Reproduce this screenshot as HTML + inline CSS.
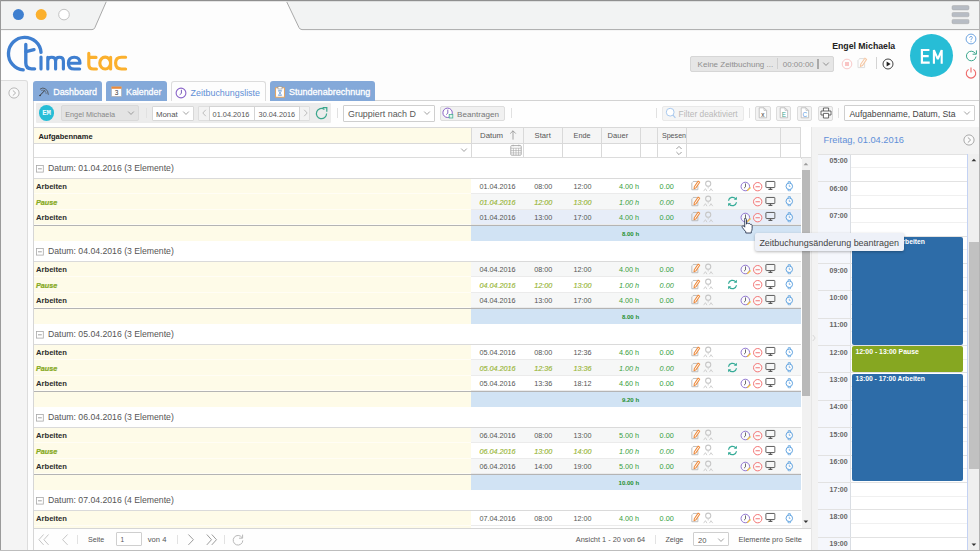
<!DOCTYPE html>
<html><head><meta charset="utf-8"><title>TimeTac</title>
<style>
html,body{margin:0;padding:0;}
body{width:980px;height:551px;overflow:hidden;position:relative;background:#fdfdfd;font-family:"Liberation Sans",sans-serif;}
.a{position:absolute;}
.t{position:absolute;white-space:nowrap;}
svg{position:absolute;overflow:visible;}
</style></head><body>
<svg width="0" height="0" style="position:absolute">
<defs>
<symbol id="i-edit" viewBox="0 0 12 12"><path d="M3.2 1.6h5.2M2 3v7.6h6.6V6" fill="none" stroke="#b9b9b9" stroke-width="1"/><path d="M2 3l1.4-1.4V3z" fill="#ccc"/><path d="M8.9 1.2l1.7 1.2-4.2 6.2-2 .9.3-2.2z" fill="#fff" stroke="#ee8a3c" stroke-width="1.1" stroke-linejoin="round"/></symbol>
<symbol id="i-user" viewBox="0 0 12 12"><circle cx="6" cy="3.6" r="2.5" fill="none" stroke="#c6c6c6" stroke-width="1"/><path d="M6 6.2v2M1.6 10.8l1.7-2.4 1.5 2.4M7.2 10.8l1.5-2.4 1.7 2.4" fill="none" stroke="#cdcdcd" stroke-width=".9"/></symbol>
<symbol id="i-sync" viewBox="0 0 12 12"><path d="M1.6 5.2A4.5 4.5 0 0 1 9.6 3.2M10.4 6.8A4.5 4.5 0 0 1 2.4 8.8" fill="none" stroke="#35ab97" stroke-width="1.4"/><path d="M10.8 .8v3.4H7.4zM1.2 11.2V7.8h3.4z" fill="#35ab97"/></symbol>
<symbol id="i-clock" viewBox="0 0 12 12"><circle cx="5.6" cy="5.8" r="4.5" fill="#fff" fill-opacity=".6" stroke="#9075d0" stroke-width="1.05"/><path d="M5.8 2.6v3.6L4.2 7.6" fill="none" stroke="#555" stroke-width=".9"/><path d="M10.6 6.4l1 1-3 3-1.4.4.4-1.4z" fill="#f3c03c"/></symbol>
<symbol id="i-minus" viewBox="0 0 12 12"><circle cx="6" cy="6" r="4.4" fill="#fff" fill-opacity=".5" stroke="#f27474" stroke-width="1.05"/><path d="M3.7 6h4.6" stroke="#f27474" stroke-width="1.2"/></symbol>
<symbol id="i-mon" viewBox="0 0 12 12"><rect x="1" y="1.6" width="10" height="6.8" rx=".6" fill="none" stroke="#5c5c5c" stroke-width="1.1"/><path d="M6 8.4v1.6M3.8 10.4h4.4" stroke="#5c5c5c" stroke-width="1.2"/></symbol>
<symbol id="i-watch" viewBox="0 0 12 12"><circle cx="6" cy="6" r="3.7" fill="#fff" fill-opacity=".5" stroke="#5fa2e0" stroke-width="1.1"/><path d="M4.5 2.6L4.9 .7h2.2L7.5 2.6M4.5 9.4l.4 1.9h2.2L7.5 9.4" fill="none" stroke="#5fa2e0" stroke-width=".9"/><path d="M6 4.2V6.2h1.3" fill="none" stroke="#5fa2e0" stroke-width=".8"/></symbol>
<symbol id="i-chev" viewBox="0 0 10 10"><path d="M1.5 3.2L5 6.8 8.5 3.2" fill="none" stroke="currentColor" stroke-width="1"/></symbol>
</defs></svg>
<svg style="left:0;top:0" width="980" height="32" viewBox="0 0 980 32">
<rect x="0" y="0" width="980" height="29.5" fill="#f2f3f3"/>
<path d="M92 29.6 L94.5 28.4 L106 2.2 Q106.6 1.2 108 1.2 L285 1.2 Q286.4 1.2 287 2.4 L299 27.6 Q299.8 29.4 302 29.6 L980 29.6 L980 32 L0 32 L0 29.6 Z" fill="#fdfdfd"/>
<path d="M0 29.6 L92 29.6 Q94 29.6 94.8 27.8 L106.2 1.8 M286.8 2 L299 27.6 Q299.8 29.4 302 29.6 L980 29.6" fill="none" stroke="#a9a9a9" stroke-width="1"/>
<rect x="0" y="0" width="980" height="1.2" fill="#8f8f8f"/>
<circle cx="18.4" cy="14.6" r="5.5" fill="#3f7fcf"/>
<circle cx="41.2" cy="14.6" r="5.5" fill="#fbb02d"/>
<circle cx="64" cy="14.6" r="5.3" fill="#fff" stroke="#b5b5b5" stroke-width="0.8"/>
<rect x="952" y="5.6" width="17" height="4.3" rx="1.3" fill="#b7bcc4" stroke="#a8a8a8" stroke-width=".5"/>
<rect x="952" y="12.5" width="17" height="4.3" rx="1.3" fill="#b7bcc4" stroke="#a8a8a8" stroke-width=".5"/>
<rect x="952" y="19.4" width="17" height="4.3" rx="1.3" fill="#b7bcc4" stroke="#a8a8a8" stroke-width=".5"/>
</svg>
<div class="a" style="left:0.00px;top:0.00px;width:1.40px;height:551.00px;background:#9a9a9a;"></div><div class="a" style="left:979.00px;top:0.00px;width:1.00px;height:551.00px;background:#b4b4b4;z-index:40;"></div><div class="a" style="left:0.00px;top:549.70px;width:980.00px;height:1.30px;background:#bdbdbd;z-index:50;"></div><svg style="left:0;top:30px" width="140" height="50" viewBox="0 30 140 50" fill="none" stroke-linecap="round" stroke-linejoin="round">
<g stroke="#3f7fd0" stroke-width="3.35">
<path d="M23.2 69.9 A16.3 16.3 0 1 1 41 52.4"/>
<path d="M25.8 44.4 V63 Q25.8 68.8 31.6 68.8 H34.6"/>
<path d="M26 51.6 L34 49.6"/>
</g><g stroke="#3f7fd0" stroke-width="3.15"><path d="M41 57 V69"/>
<path d="M47.8 69 V57.2 M47.8 61 Q47.8 57.2 51.7 57.2 Q55.6 57.2 55.6 61 V69 M55.6 61 Q55.6 57.2 59.5 57.2 Q63.4 57.2 63.4 61 V69"/>
<path d="M68.6 63.2 H80 Q80 57.2 74.3 57.2 Q68.4 57.2 68.4 63.2 Q68.4 69 74.3 69 H79.6"/>
</g>
<g stroke="#fbb02d" stroke-width="3.15">
<path d="M88.8 53.4 V64.4 Q88.8 69 93.4 69 H96.4 M88.8 57.4 H96"/>
<path d="M110.6 57.2 V69 M110.6 63.1 A5.4 5.9 0 1 0 99.8 63.1 A5.4 5.9 0 1 0 110.6 63.1"/>
<path d="M125.6 57.2 H121.4 Q115.6 57.2 115.6 63.1 Q115.6 69 121.4 69 H125.6"/>
</g>
</svg>
<span class="t" style="left:832.20px;top:39.00px;font-size:8.72px;line-height:14px;color:#222;font-weight:bold;">Engel Michaela</span><div class="a" style="left:690.00px;top:56.40px;width:143.60px;height:15.20px;background:#e6e6e6;border:1px solid #d6d6d6;box-sizing:border-box;border-radius:2px;"></div><span class="t" style="left:697.60px;top:58.00px;font-size:8.00px;line-height:13px;color:#8e8e8e;">Keine Zeitbuchung ...</span><div class="a" style="left:777.30px;top:58.40px;width:0.90px;height:11.00px;background:#cfcfcf;"></div><span class="t" style="left:782.80px;top:58.00px;font-size:7.96px;line-height:13px;color:#8e8e8e;">00:00:00</span><div class="a" style="left:817.20px;top:58.60px;width:1.40px;height:10.80px;background:#a9a9a9;"></div><svg style="left:821.6px;top:60.4px;color:#7a7a7a" width="8" height="8"><use href="#i-chev"/></svg><svg style="left:841px;top:57.6px" width="12" height="12" viewBox="0 0 12 12"><circle cx="6" cy="6" r="4.8" fill="none" stroke="#f9c9c9" stroke-width="1"/><rect x="4" y="4" width="4" height="4" fill="#f9c4c4"/></svg><svg style="left:856px;top:57.4px;opacity:.45" width="12" height="12"><use href="#i-edit"/></svg><div class="a" style="left:875.60px;top:56.60px;width:0.80px;height:12.80px;background:#d4d4d4;"></div><svg style="left:882px;top:57.6px" width="12" height="12" viewBox="0 0 12 12"><circle cx="6" cy="6" r="5" fill="#fff" stroke="#444" stroke-width="1"/><path d="M4.6 3.6L8.6 6 4.6 8.4z" fill="#222"/></svg><div class="a" style="left:909.90px;top:33.50px;width:43.00px;height:43.00px;background:#27bdd6;border-radius:50%;"></div><svg style="left:909.9px;top:33.5px" width="43" height="43" viewBox="909.9 33.5 43 43"><path d="M929.3 49.5H921.8V62.1H929.6M921.8 55.6H928.6" fill="none" stroke="#fff" stroke-width="2.2"/><path d="M933.8 63.2V49.6L937.7 58.6 941.6 49.6V63.2" fill="none" stroke="#fff" stroke-width="2.1" stroke-linejoin="miter" stroke-miterlimit="1.3"/></svg><svg style="left:965px;top:32.6px" width="12" height="12" viewBox="0 0 12 12"><circle cx="6" cy="6" r="4.9" fill="#fff" stroke="#6ea4e0" stroke-width="1"/><path d="M4.6 4.8Q4.6 3.4 6 3.4T7.4 4.8Q7.4 5.6 6 6.4V7.2M6 8.2V9.2" fill="none" stroke="#6ea4e0" stroke-width=".9"/></svg><svg style="left:964px;top:49px" width="14" height="14" viewBox="964 49 14 14"><path d="M975.4 53.6A4.8 4.8 0 1 0 976 56.6" fill="none" stroke="#3aa68c" stroke-width="1"/><path d="M976.4 50.4V54.2H972.6" fill="none" stroke="#3aa68c" stroke-width="1"/></svg><svg style="left:965.2px;top:66.6px" width="12" height="12" viewBox="0 0 12 12"><path d="M8.4 2.4A4.7 4.7 0 1 1 3.6 2.4M6 .6V5.6" fill="none" stroke="#ee6a6a" stroke-width="1.1"/></svg><div class="a" style="left:375.00px;top:100.00px;width:605.00px;height:1.00px;background:#d3d3d3;"></div><div class="a" style="left:1.20px;top:80.20px;width:26.80px;height:470.80px;background:#f4f4f4;border:1px solid #dcdcdc;box-sizing:border-box;border-radius:0 3px 0 0;border-left:none;"></div><svg style="left:8px;top:86.6px" width="12" height="12" viewBox="0 0 12 12"><circle cx="6" cy="6" r="5.1" fill="#fafafa" stroke="#b8b8b8" stroke-width="1"/><path d="M4.8 3.4L7.6 6 4.8 8.6" fill="none" stroke="#b0b0b0" stroke-width="1"/></svg><div class="a" style="left:33.00px;top:80.70px;width:69.00px;height:19.90px;background:#84a9d9;border-radius:3px 3px 0 0;"></div><div class="a" style="left:106.20px;top:80.70px;width:60.40px;height:19.90px;background:#84a9d9;border-radius:3px 3px 0 0;"></div><div class="a" style="left:269.60px;top:80.70px;width:105.40px;height:19.90px;background:#84a9d9;border-radius:3px 3px 0 0;"></div><div class="a" style="left:171.40px;top:80.60px;width:94.40px;height:20.80px;background:#fdfdfd;border:1px solid #dcdcdc;box-sizing:border-box;border-radius:3px 3px 0 0;border-bottom:none;"></div><svg style="left:37.6px;top:86.2px" width="11.6" height="11.6" viewBox="0 0 13 13"><path d="M2.2 3.6Q5.4 1.2 8.4 3.2T11.6 9.8" fill="none" stroke="#4a4a4a" stroke-width=".9"/><path d="M3.6 5.2Q5.6 4 7.4 5.2T9.2 9" fill="none" stroke="#555" stroke-width=".7"/><path d="M7.6 5L2.2 10.6" stroke="#333" stroke-width="1"/><circle cx="2.3" cy="10.6" r=".9" fill="#333"/></svg><span class="t" style="left:53.20px;top:85.00px;font-size:8.95px;line-height:14px;color:#fff;-webkit-text-stroke:0.28px #fff;">Dashboard</span><svg style="left:111.4px;top:86px" width="11" height="11" viewBox="0 0 11 11"><rect x=".5" y=".8" width="10" height="9.6" fill="#fff" stroke="#aaa" stroke-width=".6"/><rect x=".5" y=".6" width="10" height="2.2" fill="#e98a3c"/><text x="5.5" y="9.2" font-size="6.6" text-anchor="middle" fill="#333" font-family="Liberation Sans">3</text></svg><span class="t" style="left:126.00px;top:85.00px;font-size:8.84px;line-height:14px;color:#fff;-webkit-text-stroke:0.28px #fff;">Kalender</span><svg style="left:175.4px;top:86.6px" width="12" height="12" viewBox="0 0 12 12"><circle cx="6" cy="6" r="4.9" fill="#fff" stroke="#8a64c8" stroke-width="1.1"/><path d="M6.4 2.8V6.4L4.6 7.8" fill="none" stroke="#6a4ab0" stroke-width=".9"/></svg><span class="t" style="left:190.60px;top:86.00px;font-size:8.94px;line-height:14px;color:#5f8fd6;">Zeitbuchungsliste</span><svg style="left:274.2px;top:86px" width="12" height="12" viewBox="0 0 12 12"><rect x="1.6" y="1.8" width="8.8" height="9.4" fill="#fff" stroke="#e9a050" stroke-width=".9"/><rect x="4" y=".6" width="4" height="2.4" fill="#fff" stroke="#999" stroke-width=".7"/><path d="M4.4 4.6h3.2L4.4 9.4h3.2z" fill="none" stroke="#6a9ad6" stroke-width=".8"/></svg><span class="t" style="left:289.00px;top:85.00px;font-size:9.04px;line-height:14px;color:#fff;-webkit-text-stroke:0.28px #fff;">Stundenabrechnung</span><div class="a" style="left:33.00px;top:100.60px;width:778.00px;height:26.80px;background:#fefefe;"></div><div class="a" style="left:36.00px;top:103.00px;width:295.00px;height:20.00px;background:#ececec;border-radius:1px;"></div><div class="a" style="left:33.20px;top:100.60px;width:0.80px;height:449.10px;background:#d6d6d6;"></div><div class="a" style="left:38.80px;top:105.40px;width:15.60px;height:15.60px;background:#27bdd6;border-radius:50%;"></div><span class="t" style="left:38.8px;top:108.4px;width:15.6px;text-align:center;font-family:'Liberation Mono',monospace;font-size:7.4px;font-weight:bold;line-height:10px;color:#e9fbff;letter-spacing:-0.2px;">EM</span><div class="a" style="left:61.00px;top:105.40px;width:78.40px;height:15.40px;background:#e3e3e3;border:1px solid #d9d9d9;box-sizing:border-box;border-radius:2px;"></div><span class="t" style="left:65.20px;top:108.00px;font-size:7.31px;line-height:13px;color:#888;">Engel Michaela</span><svg style="left:127.4px;top:108.6px;color:#8a8a8a" width="8" height="8"><use href="#i-chev"/></svg><div class="a" style="left:146.20px;top:108.20px;width:0.80px;height:9.80px;background:#e1e1e1;"></div><div class="a" style="left:152.20px;top:106.00px;width:42.00px;height:14.60px;background:#fff;border:1px solid #d8d8d8;box-sizing:border-box;border-radius:1px;"></div><span class="t" style="left:156.00px;top:108.00px;font-size:7.84px;line-height:13px;color:#555;">Monat</span><svg style="left:182.4px;top:108.8px;color:#8a8a8a" width="8" height="8"><use href="#i-chev"/></svg><div class="a" style="left:198.40px;top:106.00px;width:112.00px;height:14.60px;background:#f3f3f3;border:1px solid #dedede;box-sizing:border-box;border-radius:1px;"></div><div class="a" style="left:209.00px;top:106.00px;width:90.60px;height:14.60px;background:#fff;border:1px solid #d4d4d4;box-sizing:border-box;"></div><div class="a" style="left:254.00px;top:106.00px;width:1.00px;height:14.60px;background:#d4d4d4;"></div><svg style="left:200.6px;top:109.2px" width="7" height="8" viewBox="0 0 7 8"><path d="M4.8 .8L1.8 4l3 3.2" fill="none" stroke="#bdbdbd" stroke-width="1"/></svg><svg style="left:301.6px;top:109.2px" width="7" height="8" viewBox="0 0 7 8"><path d="M2.2 .8L5.2 4l-3 3.2" fill="none" stroke="#bdbdbd" stroke-width="1"/></svg><span class="t" style="left:212.60px;top:108.00px;font-size:7.35px;line-height:13px;color:#555;">01.04.2016</span><span class="t" style="left:258.60px;top:108.00px;font-size:7.31px;line-height:13px;color:#555;">30.04.2016</span><svg style="left:315.4px;top:106.8px" width="13" height="13" viewBox="0 0 13 13"><path d="M11.6 6.6A5.1 5.1 0 1 1 9.4 2.4" fill="none" stroke="#3aa68c" stroke-width="1.2"/><path d="M7.6 .6h4.2v4.2" fill="none" stroke="#3aa68c" stroke-width="1.2"/></svg><div class="a" style="left:337.20px;top:108.20px;width:0.80px;height:9.80px;background:#e1e1e1;"></div><div class="a" style="left:343.40px;top:105.40px;width:91.20px;height:16.20px;background:#fff;border:1px solid #cfcfcf;box-sizing:border-box;border-radius:1px;"></div><span class="t" style="left:348.00px;top:107.00px;font-size:8.93px;line-height:14px;color:#585858;">Gruppiert nach D</span><svg style="left:422.6px;top:109.2px;color:#8a8a8a" width="8" height="8"><use href="#i-chev"/></svg><div class="a" style="left:440.40px;top:105.60px;width:64.60px;height:15.00px;background:#f1f1f1;border:1px solid #dddddd;box-sizing:border-box;border-radius:2px;"></div><svg style="left:441.8px;top:107px" width="12" height="12" viewBox="0 0 12 12"><circle cx="5.6" cy="5.8" r="4.7" fill="#fff" stroke="#8a64c8" stroke-width="1"/><path d="M5.8 2.6v3.6L4.2 7.6" fill="none" stroke="#7a5ab8" stroke-width=".9"/><rect x="7.2" y="7.4" width="3.6" height="3.6" fill="#dff3ec" stroke="#49b094" stroke-width=".8"/></svg><span class="t" style="left:457.00px;top:108.00px;font-size:8.12px;line-height:13px;color:#777;">Beantragen</span><div class="a" style="left:510.80px;top:108.20px;width:0.80px;height:9.80px;background:#e1e1e1;"></div><div class="a" style="left:656.40px;top:108.20px;width:0.80px;height:9.80px;background:#e1e1e1;"></div><div class="a" style="left:662.40px;top:105.60px;width:81.20px;height:15.00px;background:#f5f5f5;border:1px solid #e9e9e9;box-sizing:border-box;border-radius:2px;"></div><svg style="left:664.6px;top:107.2px" width="12" height="12" viewBox="0 0 12 12"><circle cx="5.2" cy="5.2" r="3.9" fill="#fff" stroke="#a9c9ee" stroke-width="1"/><path d="M8 8.2L10.4 10.8" stroke="#a9c9ee" stroke-width="1.1"/></svg><span class="t" style="left:678.60px;top:107.00px;font-size:8.39px;line-height:14px;color:#b9b9b9;">Filter deaktiviert</span><div class="a" style="left:749.00px;top:108.20px;width:0.80px;height:9.80px;background:#e1e1e1;"></div><div class="a" style="left:755.00px;top:105.60px;width:15.60px;height:15.00px;background:#f3f3f3;border:1px solid #dcdcdc;box-sizing:border-box;border-radius:2px;"></div><svg style="left:758.20px;top:107.4px" width="10" height="12" viewBox="0 0 10 12"><path d="M1.2 .8H6L8.6 3.4V10.8H1.2Z" fill="#fff" stroke="#b5b5b5" stroke-width=".8"/><path d="M6 .8V3.4H8.6" fill="none" stroke="#b5b5b5" stroke-width=".7"/><text x="4.9" y="9.6" font-size="6.4" text-anchor="middle" fill="#333" font-family="Liberation Sans">x</text></svg><div class="a" style="left:776.00px;top:105.60px;width:15.40px;height:15.00px;background:#f3f3f3;border:1px solid #dcdcdc;box-sizing:border-box;border-radius:2px;"></div><svg style="left:779.10px;top:107.4px" width="10" height="12" viewBox="0 0 10 12"><path d="M1.2 .8H6L8.6 3.4V10.8H1.2Z" fill="#fff" stroke="#b5b5b5" stroke-width=".8"/><path d="M6 .8V3.4H8.6" fill="none" stroke="#b5b5b5" stroke-width=".7"/><text x="4.9" y="9.6" font-size="6.4" text-anchor="middle" fill="#3aa68c" font-family="Liberation Sans">E</text></svg><div class="a" style="left:797.00px;top:105.60px;width:15.20px;height:15.00px;background:#f3f3f3;border:1px solid #dcdcdc;box-sizing:border-box;border-radius:2px;"></div><svg style="left:800.00px;top:107.4px" width="10" height="12" viewBox="0 0 10 12"><path d="M1.2 .8H6L8.6 3.4V10.8H1.2Z" fill="#fff" stroke="#b5b5b5" stroke-width=".8"/><path d="M6 .8V3.4H8.6" fill="none" stroke="#b5b5b5" stroke-width=".7"/><text x="4.9" y="9.6" font-size="6.4" text-anchor="middle" fill="#5f9be0" font-family="Liberation Sans">C</text></svg><div class="a" style="left:817.60px;top:105.60px;width:15.60px;height:15.00px;background:#f3f3f3;border:1px solid #dcdcdc;box-sizing:border-box;border-radius:2px;"></div><svg style="left:819.6px;top:107.2px" width="12" height="12" viewBox="0 0 12 12"><path d="M3.4 4V1h5.2V4M3.4 8H1V4h10V8H8.6M3.4 6.4h5.2V11H3.4Z" fill="#fff" stroke="#444" stroke-width=".8"/></svg><div class="a" style="left:838.00px;top:108.20px;width:0.80px;height:9.80px;background:#e1e1e1;"></div><div class="a" style="left:844.40px;top:105.40px;width:130.20px;height:16.00px;background:#fff;border:1px solid #cfcfcf;box-sizing:border-box;border-radius:1px;"></div><span class="t" style="left:849.40px;top:107.00px;font-size:8.61px;line-height:14px;color:#444;">Aufgabenname, Datum, Sta</span><svg style="left:963.4px;top:109.2px;color:#8a8a8a" width="8" height="8"><use href="#i-chev"/></svg><div class="a" style="left:34.00px;top:127.40px;width:777.00px;height:401.60px;background:#fff;"></div><div class="a" style="left:34.00px;top:127.40px;width:437.20px;height:15.60px;background:#fefbe8;"></div><div class="a" style="left:471.20px;top:127.40px;width:329.40px;height:15.60px;background:#f5f5f5;"></div><div class="a" style="left:34.00px;top:127.00px;width:766.60px;height:1.00px;background:#d9d9d9;"></div><div class="a" style="left:34.00px;top:142.60px;width:766.60px;height:1.00px;background:#d9d9d9;"></div><div class="a" style="left:34.00px;top:157.20px;width:777.00px;height:1.40px;background:#dcdcdc;"></div><div class="a" style="left:470.70px;top:127.40px;width:1.00px;height:30.00px;background:#d9d9d9;"></div><div class="a" style="left:522.90px;top:127.40px;width:1.00px;height:30.00px;background:#d9d9d9;"></div><div class="a" style="left:561.90px;top:127.40px;width:1.00px;height:30.00px;background:#d9d9d9;"></div><div class="a" style="left:600.90px;top:127.40px;width:1.00px;height:30.00px;background:#d9d9d9;"></div><div class="a" style="left:639.90px;top:127.40px;width:1.00px;height:30.00px;background:#d9d9d9;"></div><div class="a" style="left:656.80px;top:127.40px;width:1.00px;height:30.00px;background:#d9d9d9;"></div><div class="a" style="left:685.80px;top:127.40px;width:1.00px;height:30.00px;background:#d9d9d9;"></div><div class="a" style="left:779.80px;top:127.40px;width:1.00px;height:30.00px;background:#d9d9d9;"></div><div class="a" style="left:800.10px;top:127.40px;width:1.00px;height:30.00px;background:#d9d9d9;"></div><span class="t" style="left:38.40px;top:130.00px;font-size:7.50px;line-height:13px;color:#222;font-weight:bold;">Aufgabenname</span><span class="t" style="left:480.00px;top:129.00px;font-size:7.81px;line-height:13px;color:#555;">Datum</span><svg style="left:508.9px;top:129.8px" width="8" height="10" viewBox="0 0 8 10"><path d="M4 9.6V.8M1.2 3.6L4 .8 6.8 3.6" fill="none" stroke="#909090" stroke-width=".8"/></svg><span class="t" style="left:534.60px;top:129.00px;font-size:7.67px;line-height:13px;color:#555;">Start</span><span class="t" style="left:573.60px;top:129.00px;font-size:7.28px;line-height:13px;color:#555;">Ende</span><span class="t" style="left:607.60px;top:129.00px;font-size:7.56px;line-height:13px;color:#555;">Dauer</span><span class="t" style="left:661.90px;top:130.00px;font-size:7.14px;line-height:12px;color:#555;">Spesen</span><svg style="left:459.8px;top:146px;color:#8a8a8a" width="8" height="8"><use href="#i-chev"/></svg><svg style="left:509.8px;top:143.8px" width="12" height="12" viewBox="0 0 12 12"><rect x=".8" y="1.6" width="10.4" height="9.6" rx=".8" fill="#fff" stroke="#9a9a9a" stroke-width=".8"/><path d="M.8 4.2h10.4M3.4 4.2v7M6 4.2v7M8.6 4.2v7M.8 6.6h10.4M.8 8.9h10.4M3.2.6v1.8M8.8.6v1.8" stroke="#a5a5a5" stroke-width=".6" fill="none"/></svg><svg style="left:675.4px;top:145.4px" width="8" height="11" viewBox="0 0 8 11"><path d="M1.4 4L4 1.4 6.6 4M1.4 7L4 9.6 6.6 7" fill="none" stroke="#8c8c8c" stroke-width=".85"/></svg><div class="a" style="left:34.00px;top:158.00px;width:766.60px;height:20.50px;background:#fff;"></div><div class="a" style="left:34.00px;top:177.90px;width:766.60px;height:0.80px;background:#dadada;"></div><svg style="left:36px;top:165.20px" width="8" height="8" viewBox="0 0 8 8"><rect x=".5" y=".5" width="6.8" height="6.6" fill="#fff" stroke="#a8a8a8" stroke-width=".8"/><path d="M2 3.8h3.8" stroke="#8a8a8a" stroke-width=".8"/></svg><span class="t" style="left:48.00px;top:161.00px;font-size:8.68px;line-height:14px;color:#555;">Datum: 01.04.2016 (3 Elemente)</span><div class="a" style="left:34.00px;top:178.50px;width:437.20px;height:15.50px;background:#fefbe8;"></div><div class="a" style="left:471.20px;top:178.50px;width:329.40px;height:15.50px;background:#fff;"></div><div class="a" style="left:34.00px;top:193.40px;width:437.20px;height:0.80px;background:rgba(255,255,255,.55);"></div><div class="a" style="left:471.20px;top:193.40px;width:329.40px;height:0.80px;background:#ebebeb;"></div><span class="t" style="left:36.00px;top:180.00px;font-size:7.64px;line-height:13px;color:#2d2d2d;font-weight:bold;">Arbeiten</span><span class="t" style="left:479.40px;top:180.00px;font-size:7.23px;line-height:13px;color:#555;">01.04.2016</span><span class="t" style="left:534.20px;top:180.00px;font-size:7.27px;line-height:13px;color:#555;">08:00</span><span class="t" style="left:573.60px;top:180.00px;font-size:7.19px;line-height:13px;color:#555;">12:00</span><span class="t" style="left:618.90px;top:180.00px;font-size:7.27px;line-height:13px;color:#36a03c;">4.00 h</span><span class="t" style="left:659.60px;top:180.00px;font-size:7.30px;line-height:13px;color:#36a03c;">0.00</span><svg style="left:690.10px;top:180.40px;" width="11" height="11"><use href="#i-edit"/></svg><svg style="left:701.70px;top:179.90px;" width="12.4" height="12.4"><use href="#i-user"/></svg><svg style="left:739.60px;top:180.70px;" width="11.4" height="11.4"><use href="#i-clock"/></svg><svg style="left:751.70px;top:180.70px;" width="11.4" height="11.4"><use href="#i-minus"/></svg><svg style="left:764.60px;top:180.10px;" width="10.8" height="10.8"><use href="#i-mon"/></svg><svg style="left:784.20px;top:180.60px;" width="10.6" height="10.6"><use href="#i-watch"/></svg><div class="a" style="left:34.00px;top:194.00px;width:437.20px;height:15.50px;background:#fefbe8;"></div><div class="a" style="left:471.20px;top:194.00px;width:329.40px;height:15.50px;background:#f6f7f7;"></div><div class="a" style="left:34.00px;top:208.90px;width:437.20px;height:0.80px;background:rgba(255,255,255,.55);"></div><div class="a" style="left:471.20px;top:208.90px;width:329.40px;height:0.80px;background:#ebebeb;"></div><span class="t" style="left:36.00px;top:196.00px;font-size:7.26px;line-height:13px;color:#86a922;font-weight:bold;font-style:italic;-webkit-text-stroke:0.2px #86a922;">Pause</span><span class="t" style="left:479.40px;top:196.00px;font-size:7.23px;line-height:13px;color:#97b535;font-style:italic;-webkit-text-stroke:0.15px #97b535;">01.04.2016</span><span class="t" style="left:534.20px;top:196.00px;font-size:7.27px;line-height:13px;color:#97b535;font-style:italic;-webkit-text-stroke:0.15px #97b535;">12:00</span><span class="t" style="left:573.60px;top:196.00px;font-size:7.19px;line-height:13px;color:#97b535;font-style:italic;-webkit-text-stroke:0.15px #97b535;">13:00</span><span class="t" style="left:618.90px;top:196.00px;font-size:7.27px;line-height:13px;color:#36a03c;font-style:italic;">1.00 h</span><span class="t" style="left:659.60px;top:196.00px;font-size:7.30px;line-height:13px;color:#36a03c;font-style:italic;">0.00</span><svg style="left:690.10px;top:195.90px;" width="11" height="11"><use href="#i-edit"/></svg><svg style="left:701.70px;top:195.40px;" width="12.4" height="12.4"><use href="#i-user"/></svg><svg style="left:727.20px;top:195.90px;" width="11" height="11"><use href="#i-sync"/></svg><svg style="left:751.70px;top:196.20px;" width="11.4" height="11.4"><use href="#i-minus"/></svg><svg style="left:764.60px;top:195.60px;" width="10.8" height="10.8"><use href="#i-mon"/></svg><svg style="left:784.20px;top:196.10px;" width="10.6" height="10.6"><use href="#i-watch"/></svg><div class="a" style="left:34.00px;top:209.50px;width:437.20px;height:15.50px;background:#fefbe8;"></div><div class="a" style="left:471.20px;top:209.50px;width:329.40px;height:15.50px;background:#e7edf8;"></div><div class="a" style="left:34.00px;top:224.40px;width:437.20px;height:0.80px;background:rgba(255,255,255,.55);"></div><div class="a" style="left:471.20px;top:224.40px;width:329.40px;height:0.80px;background:#ebebeb;"></div><span class="t" style="left:36.00px;top:211.00px;font-size:7.64px;line-height:13px;color:#2d2d2d;font-weight:bold;">Arbeiten</span><span class="t" style="left:479.40px;top:211.00px;font-size:7.23px;line-height:13px;color:#555;">01.04.2016</span><span class="t" style="left:534.20px;top:211.00px;font-size:7.27px;line-height:13px;color:#555;">13:00</span><span class="t" style="left:573.60px;top:211.00px;font-size:7.19px;line-height:13px;color:#555;">17:00</span><span class="t" style="left:618.90px;top:211.00px;font-size:7.27px;line-height:13px;color:#36a03c;">4.00 h</span><span class="t" style="left:659.60px;top:211.00px;font-size:7.30px;line-height:13px;color:#36a03c;">0.00</span><svg style="left:690.10px;top:211.40px;" width="11" height="11"><use href="#i-edit"/></svg><svg style="left:701.70px;top:210.90px;" width="12.4" height="12.4"><use href="#i-user"/></svg><svg style="left:739.60px;top:211.70px;" width="11.4" height="11.4"><use href="#i-clock"/></svg><svg style="left:751.70px;top:211.70px;" width="11.4" height="11.4"><use href="#i-minus"/></svg><svg style="left:764.60px;top:211.10px;" width="10.8" height="10.8"><use href="#i-mon"/></svg><svg style="left:784.20px;top:211.60px;" width="10.6" height="10.6"><use href="#i-watch"/></svg><div class="a" style="left:34.00px;top:224.60px;width:766.60px;height:1.00px;background:#b4b4b4;"></div><div class="a" style="left:34.00px;top:225.60px;width:437.20px;height:15.80px;background:#fefbe8;"></div><div class="a" style="left:471.20px;top:225.60px;width:329.40px;height:15.80px;background:#d1e3f4;"></div><span class="t" style="left:621.95px;top:229.00px;font-size:6.05px;line-height:10px;color:#1f8f2c;font-weight:bold;">8.00 h</span><div class="a" style="left:34.00px;top:241.00px;width:766.60px;height:20.50px;background:#fff;"></div><div class="a" style="left:34.00px;top:260.90px;width:766.60px;height:0.80px;background:#dadada;"></div><svg style="left:36px;top:248.20px" width="8" height="8" viewBox="0 0 8 8"><rect x=".5" y=".5" width="6.8" height="6.6" fill="#fff" stroke="#a8a8a8" stroke-width=".8"/><path d="M2 3.8h3.8" stroke="#8a8a8a" stroke-width=".8"/></svg><span class="t" style="left:48.00px;top:244.00px;font-size:8.68px;line-height:14px;color:#555;">Datum: 04.04.2016 (3 Elemente)</span><div class="a" style="left:34.00px;top:261.50px;width:437.20px;height:15.50px;background:#fefbe8;"></div><div class="a" style="left:471.20px;top:261.50px;width:329.40px;height:15.50px;background:#f6f7f7;"></div><div class="a" style="left:34.00px;top:276.40px;width:437.20px;height:0.80px;background:rgba(255,255,255,.55);"></div><div class="a" style="left:471.20px;top:276.40px;width:329.40px;height:0.80px;background:#ebebeb;"></div><span class="t" style="left:36.00px;top:263.00px;font-size:7.64px;line-height:13px;color:#2d2d2d;font-weight:bold;">Arbeiten</span><span class="t" style="left:479.40px;top:263.00px;font-size:7.23px;line-height:13px;color:#555;">04.04.2016</span><span class="t" style="left:534.20px;top:263.00px;font-size:7.27px;line-height:13px;color:#555;">08:00</span><span class="t" style="left:573.60px;top:263.00px;font-size:7.19px;line-height:13px;color:#555;">12:00</span><span class="t" style="left:618.90px;top:263.00px;font-size:7.27px;line-height:13px;color:#36a03c;">4.00 h</span><span class="t" style="left:659.60px;top:263.00px;font-size:7.30px;line-height:13px;color:#36a03c;">0.00</span><svg style="left:690.10px;top:263.40px;" width="11" height="11"><use href="#i-edit"/></svg><svg style="left:701.70px;top:262.90px;" width="12.4" height="12.4"><use href="#i-user"/></svg><svg style="left:739.60px;top:263.70px;" width="11.4" height="11.4"><use href="#i-clock"/></svg><svg style="left:751.70px;top:263.70px;" width="11.4" height="11.4"><use href="#i-minus"/></svg><svg style="left:764.60px;top:263.10px;" width="10.8" height="10.8"><use href="#i-mon"/></svg><svg style="left:784.20px;top:263.60px;" width="10.6" height="10.6"><use href="#i-watch"/></svg><div class="a" style="left:34.00px;top:277.00px;width:437.20px;height:15.50px;background:#fefbe8;"></div><div class="a" style="left:471.20px;top:277.00px;width:329.40px;height:15.50px;background:#fff;"></div><div class="a" style="left:34.00px;top:291.90px;width:437.20px;height:0.80px;background:rgba(255,255,255,.55);"></div><div class="a" style="left:471.20px;top:291.90px;width:329.40px;height:0.80px;background:#ebebeb;"></div><span class="t" style="left:36.00px;top:279.00px;font-size:7.26px;line-height:13px;color:#86a922;font-weight:bold;font-style:italic;-webkit-text-stroke:0.2px #86a922;">Pause</span><span class="t" style="left:479.40px;top:279.00px;font-size:7.23px;line-height:13px;color:#97b535;font-style:italic;-webkit-text-stroke:0.15px #97b535;">04.04.2016</span><span class="t" style="left:534.20px;top:279.00px;font-size:7.27px;line-height:13px;color:#97b535;font-style:italic;-webkit-text-stroke:0.15px #97b535;">12:00</span><span class="t" style="left:573.60px;top:279.00px;font-size:7.19px;line-height:13px;color:#97b535;font-style:italic;-webkit-text-stroke:0.15px #97b535;">13:00</span><span class="t" style="left:618.90px;top:279.00px;font-size:7.27px;line-height:13px;color:#36a03c;font-style:italic;">1.00 h</span><span class="t" style="left:659.60px;top:279.00px;font-size:7.30px;line-height:13px;color:#36a03c;font-style:italic;">0.00</span><svg style="left:690.10px;top:278.90px;" width="11" height="11"><use href="#i-edit"/></svg><svg style="left:701.70px;top:278.40px;" width="12.4" height="12.4"><use href="#i-user"/></svg><svg style="left:727.20px;top:278.90px;" width="11" height="11"><use href="#i-sync"/></svg><svg style="left:751.70px;top:279.20px;" width="11.4" height="11.4"><use href="#i-minus"/></svg><svg style="left:764.60px;top:278.60px;" width="10.8" height="10.8"><use href="#i-mon"/></svg><svg style="left:784.20px;top:279.10px;" width="10.6" height="10.6"><use href="#i-watch"/></svg><div class="a" style="left:34.00px;top:292.50px;width:437.20px;height:15.50px;background:#fefbe8;"></div><div class="a" style="left:471.20px;top:292.50px;width:329.40px;height:15.50px;background:#f6f7f7;"></div><div class="a" style="left:34.00px;top:307.40px;width:437.20px;height:0.80px;background:rgba(255,255,255,.55);"></div><div class="a" style="left:471.20px;top:307.40px;width:329.40px;height:0.80px;background:#ebebeb;"></div><span class="t" style="left:36.00px;top:294.00px;font-size:7.64px;line-height:13px;color:#2d2d2d;font-weight:bold;">Arbeiten</span><span class="t" style="left:479.40px;top:294.00px;font-size:7.23px;line-height:13px;color:#555;">04.04.2016</span><span class="t" style="left:534.20px;top:294.00px;font-size:7.27px;line-height:13px;color:#555;">13:00</span><span class="t" style="left:573.60px;top:294.00px;font-size:7.19px;line-height:13px;color:#555;">17:00</span><span class="t" style="left:618.90px;top:294.00px;font-size:7.27px;line-height:13px;color:#36a03c;">4.00 h</span><span class="t" style="left:659.60px;top:294.00px;font-size:7.30px;line-height:13px;color:#36a03c;">0.00</span><svg style="left:690.10px;top:294.40px;" width="11" height="11"><use href="#i-edit"/></svg><svg style="left:701.70px;top:293.90px;" width="12.4" height="12.4"><use href="#i-user"/></svg><svg style="left:739.60px;top:294.70px;" width="11.4" height="11.4"><use href="#i-clock"/></svg><svg style="left:751.70px;top:294.70px;" width="11.4" height="11.4"><use href="#i-minus"/></svg><svg style="left:764.60px;top:294.10px;" width="10.8" height="10.8"><use href="#i-mon"/></svg><svg style="left:784.20px;top:294.60px;" width="10.6" height="10.6"><use href="#i-watch"/></svg><div class="a" style="left:34.00px;top:307.60px;width:766.60px;height:1.00px;background:#b4b4b4;"></div><div class="a" style="left:34.00px;top:308.60px;width:437.20px;height:15.80px;background:#fefbe8;"></div><div class="a" style="left:471.20px;top:308.60px;width:329.40px;height:15.80px;background:#d1e3f4;"></div><span class="t" style="left:621.95px;top:312.00px;font-size:6.05px;line-height:10px;color:#1f8f2c;font-weight:bold;">8.00 h</span><div class="a" style="left:34.00px;top:324.00px;width:766.60px;height:20.50px;background:#fff;"></div><div class="a" style="left:34.00px;top:343.90px;width:766.60px;height:0.80px;background:#dadada;"></div><svg style="left:36px;top:331.20px" width="8" height="8" viewBox="0 0 8 8"><rect x=".5" y=".5" width="6.8" height="6.6" fill="#fff" stroke="#a8a8a8" stroke-width=".8"/><path d="M2 3.8h3.8" stroke="#8a8a8a" stroke-width=".8"/></svg><span class="t" style="left:48.00px;top:327.00px;font-size:8.68px;line-height:14px;color:#555;">Datum: 05.04.2016 (3 Elemente)</span><div class="a" style="left:34.00px;top:344.50px;width:437.20px;height:15.50px;background:#fefbe8;"></div><div class="a" style="left:471.20px;top:344.50px;width:329.40px;height:15.50px;background:#fff;"></div><div class="a" style="left:34.00px;top:359.40px;width:437.20px;height:0.80px;background:rgba(255,255,255,.55);"></div><div class="a" style="left:471.20px;top:359.40px;width:329.40px;height:0.80px;background:#ebebeb;"></div><span class="t" style="left:36.00px;top:346.00px;font-size:7.64px;line-height:13px;color:#2d2d2d;font-weight:bold;">Arbeiten</span><span class="t" style="left:479.40px;top:346.00px;font-size:7.23px;line-height:13px;color:#555;">05.04.2016</span><span class="t" style="left:534.20px;top:346.00px;font-size:7.27px;line-height:13px;color:#555;">08:00</span><span class="t" style="left:573.60px;top:346.00px;font-size:7.19px;line-height:13px;color:#555;">12:36</span><span class="t" style="left:618.90px;top:346.00px;font-size:7.27px;line-height:13px;color:#36a03c;">4.60 h</span><span class="t" style="left:659.60px;top:346.00px;font-size:7.30px;line-height:13px;color:#36a03c;">0.00</span><svg style="left:690.10px;top:346.40px;" width="11" height="11"><use href="#i-edit"/></svg><svg style="left:701.70px;top:345.90px;" width="12.4" height="12.4"><use href="#i-user"/></svg><svg style="left:739.60px;top:346.70px;" width="11.4" height="11.4"><use href="#i-clock"/></svg><svg style="left:751.70px;top:346.70px;" width="11.4" height="11.4"><use href="#i-minus"/></svg><svg style="left:764.60px;top:346.10px;" width="10.8" height="10.8"><use href="#i-mon"/></svg><svg style="left:784.20px;top:346.60px;" width="10.6" height="10.6"><use href="#i-watch"/></svg><div class="a" style="left:34.00px;top:360.00px;width:437.20px;height:15.50px;background:#fefbe8;"></div><div class="a" style="left:471.20px;top:360.00px;width:329.40px;height:15.50px;background:#f6f7f7;"></div><div class="a" style="left:34.00px;top:374.90px;width:437.20px;height:0.80px;background:rgba(255,255,255,.55);"></div><div class="a" style="left:471.20px;top:374.90px;width:329.40px;height:0.80px;background:#ebebeb;"></div><span class="t" style="left:36.00px;top:362.00px;font-size:7.26px;line-height:13px;color:#86a922;font-weight:bold;font-style:italic;-webkit-text-stroke:0.2px #86a922;">Pause</span><span class="t" style="left:479.40px;top:362.00px;font-size:7.23px;line-height:13px;color:#97b535;font-style:italic;-webkit-text-stroke:0.15px #97b535;">05.04.2016</span><span class="t" style="left:534.20px;top:362.00px;font-size:7.27px;line-height:13px;color:#97b535;font-style:italic;-webkit-text-stroke:0.15px #97b535;">12:36</span><span class="t" style="left:573.60px;top:362.00px;font-size:7.19px;line-height:13px;color:#97b535;font-style:italic;-webkit-text-stroke:0.15px #97b535;">13:36</span><span class="t" style="left:618.90px;top:362.00px;font-size:7.27px;line-height:13px;color:#36a03c;font-style:italic;">1.00 h</span><span class="t" style="left:659.60px;top:362.00px;font-size:7.30px;line-height:13px;color:#36a03c;font-style:italic;">0.00</span><svg style="left:690.10px;top:361.90px;" width="11" height="11"><use href="#i-edit"/></svg><svg style="left:701.70px;top:361.40px;" width="12.4" height="12.4"><use href="#i-user"/></svg><svg style="left:727.20px;top:361.90px;" width="11" height="11"><use href="#i-sync"/></svg><svg style="left:751.70px;top:362.20px;" width="11.4" height="11.4"><use href="#i-minus"/></svg><svg style="left:764.60px;top:361.60px;" width="10.8" height="10.8"><use href="#i-mon"/></svg><svg style="left:784.20px;top:362.10px;" width="10.6" height="10.6"><use href="#i-watch"/></svg><div class="a" style="left:34.00px;top:375.50px;width:437.20px;height:15.50px;background:#fefbe8;"></div><div class="a" style="left:471.20px;top:375.50px;width:329.40px;height:15.50px;background:#fff;"></div><div class="a" style="left:34.00px;top:390.40px;width:437.20px;height:0.80px;background:rgba(255,255,255,.55);"></div><div class="a" style="left:471.20px;top:390.40px;width:329.40px;height:0.80px;background:#ebebeb;"></div><span class="t" style="left:36.00px;top:377.00px;font-size:7.64px;line-height:13px;color:#2d2d2d;font-weight:bold;">Arbeiten</span><span class="t" style="left:479.40px;top:377.00px;font-size:7.23px;line-height:13px;color:#555;">05.04.2016</span><span class="t" style="left:534.20px;top:377.00px;font-size:7.27px;line-height:13px;color:#555;">13:36</span><span class="t" style="left:573.60px;top:377.00px;font-size:7.19px;line-height:13px;color:#555;">18:12</span><span class="t" style="left:618.90px;top:377.00px;font-size:7.27px;line-height:13px;color:#36a03c;">4.60 h</span><span class="t" style="left:659.60px;top:377.00px;font-size:7.30px;line-height:13px;color:#36a03c;">0.00</span><svg style="left:690.10px;top:377.40px;" width="11" height="11"><use href="#i-edit"/></svg><svg style="left:701.70px;top:376.90px;" width="12.4" height="12.4"><use href="#i-user"/></svg><svg style="left:739.60px;top:377.70px;" width="11.4" height="11.4"><use href="#i-clock"/></svg><svg style="left:751.70px;top:377.70px;" width="11.4" height="11.4"><use href="#i-minus"/></svg><svg style="left:764.60px;top:377.10px;" width="10.8" height="10.8"><use href="#i-mon"/></svg><svg style="left:784.20px;top:377.60px;" width="10.6" height="10.6"><use href="#i-watch"/></svg><div class="a" style="left:34.00px;top:390.60px;width:766.60px;height:1.00px;background:#b4b4b4;"></div><div class="a" style="left:34.00px;top:391.60px;width:437.20px;height:15.80px;background:#fefbe8;"></div><div class="a" style="left:471.20px;top:391.60px;width:329.40px;height:15.80px;background:#d1e3f4;"></div><span class="t" style="left:621.95px;top:395.00px;font-size:6.05px;line-height:10px;color:#1f8f2c;font-weight:bold;">9.20 h</span><div class="a" style="left:34.00px;top:407.00px;width:766.60px;height:20.50px;background:#fff;"></div><div class="a" style="left:34.00px;top:426.90px;width:766.60px;height:0.80px;background:#dadada;"></div><svg style="left:36px;top:414.20px" width="8" height="8" viewBox="0 0 8 8"><rect x=".5" y=".5" width="6.8" height="6.6" fill="#fff" stroke="#a8a8a8" stroke-width=".8"/><path d="M2 3.8h3.8" stroke="#8a8a8a" stroke-width=".8"/></svg><span class="t" style="left:48.00px;top:410.00px;font-size:8.68px;line-height:14px;color:#555;">Datum: 06.04.2016 (3 Elemente)</span><div class="a" style="left:34.00px;top:427.50px;width:437.20px;height:15.50px;background:#fefbe8;"></div><div class="a" style="left:471.20px;top:427.50px;width:329.40px;height:15.50px;background:#f6f7f7;"></div><div class="a" style="left:34.00px;top:442.40px;width:437.20px;height:0.80px;background:rgba(255,255,255,.55);"></div><div class="a" style="left:471.20px;top:442.40px;width:329.40px;height:0.80px;background:#ebebeb;"></div><span class="t" style="left:36.00px;top:429.00px;font-size:7.64px;line-height:13px;color:#2d2d2d;font-weight:bold;">Arbeiten</span><span class="t" style="left:479.40px;top:429.00px;font-size:7.23px;line-height:13px;color:#555;">06.04.2016</span><span class="t" style="left:534.20px;top:429.00px;font-size:7.27px;line-height:13px;color:#555;">08:00</span><span class="t" style="left:573.60px;top:429.00px;font-size:7.19px;line-height:13px;color:#555;">13:00</span><span class="t" style="left:618.90px;top:429.00px;font-size:7.27px;line-height:13px;color:#36a03c;">5.00 h</span><span class="t" style="left:659.60px;top:429.00px;font-size:7.30px;line-height:13px;color:#36a03c;">0.00</span><svg style="left:690.10px;top:429.40px;" width="11" height="11"><use href="#i-edit"/></svg><svg style="left:701.70px;top:428.90px;" width="12.4" height="12.4"><use href="#i-user"/></svg><svg style="left:739.60px;top:429.70px;" width="11.4" height="11.4"><use href="#i-clock"/></svg><svg style="left:751.70px;top:429.70px;" width="11.4" height="11.4"><use href="#i-minus"/></svg><svg style="left:764.60px;top:429.10px;" width="10.8" height="10.8"><use href="#i-mon"/></svg><svg style="left:784.20px;top:429.60px;" width="10.6" height="10.6"><use href="#i-watch"/></svg><div class="a" style="left:34.00px;top:443.00px;width:437.20px;height:15.50px;background:#fefbe8;"></div><div class="a" style="left:471.20px;top:443.00px;width:329.40px;height:15.50px;background:#fff;"></div><div class="a" style="left:34.00px;top:457.90px;width:437.20px;height:0.80px;background:rgba(255,255,255,.55);"></div><div class="a" style="left:471.20px;top:457.90px;width:329.40px;height:0.80px;background:#ebebeb;"></div><span class="t" style="left:36.00px;top:445.00px;font-size:7.26px;line-height:13px;color:#86a922;font-weight:bold;font-style:italic;-webkit-text-stroke:0.2px #86a922;">Pause</span><span class="t" style="left:479.40px;top:445.00px;font-size:7.23px;line-height:13px;color:#97b535;font-style:italic;-webkit-text-stroke:0.15px #97b535;">06.04.2016</span><span class="t" style="left:534.20px;top:445.00px;font-size:7.27px;line-height:13px;color:#97b535;font-style:italic;-webkit-text-stroke:0.15px #97b535;">13:00</span><span class="t" style="left:573.60px;top:445.00px;font-size:7.19px;line-height:13px;color:#97b535;font-style:italic;-webkit-text-stroke:0.15px #97b535;">14:00</span><span class="t" style="left:618.90px;top:445.00px;font-size:7.27px;line-height:13px;color:#36a03c;font-style:italic;">1.00 h</span><span class="t" style="left:659.60px;top:445.00px;font-size:7.30px;line-height:13px;color:#36a03c;font-style:italic;">0.00</span><svg style="left:690.10px;top:444.90px;" width="11" height="11"><use href="#i-edit"/></svg><svg style="left:701.70px;top:444.40px;" width="12.4" height="12.4"><use href="#i-user"/></svg><svg style="left:727.20px;top:444.90px;" width="11" height="11"><use href="#i-sync"/></svg><svg style="left:751.70px;top:445.20px;" width="11.4" height="11.4"><use href="#i-minus"/></svg><svg style="left:764.60px;top:444.60px;" width="10.8" height="10.8"><use href="#i-mon"/></svg><svg style="left:784.20px;top:445.10px;" width="10.6" height="10.6"><use href="#i-watch"/></svg><div class="a" style="left:34.00px;top:458.50px;width:437.20px;height:15.50px;background:#fefbe8;"></div><div class="a" style="left:471.20px;top:458.50px;width:329.40px;height:15.50px;background:#f6f7f7;"></div><div class="a" style="left:34.00px;top:473.40px;width:437.20px;height:0.80px;background:rgba(255,255,255,.55);"></div><div class="a" style="left:471.20px;top:473.40px;width:329.40px;height:0.80px;background:#ebebeb;"></div><span class="t" style="left:36.00px;top:460.00px;font-size:7.64px;line-height:13px;color:#2d2d2d;font-weight:bold;">Arbeiten</span><span class="t" style="left:479.40px;top:460.00px;font-size:7.23px;line-height:13px;color:#555;">06.04.2016</span><span class="t" style="left:534.20px;top:460.00px;font-size:7.27px;line-height:13px;color:#555;">14:00</span><span class="t" style="left:573.60px;top:460.00px;font-size:7.19px;line-height:13px;color:#555;">19:00</span><span class="t" style="left:618.90px;top:460.00px;font-size:7.27px;line-height:13px;color:#36a03c;">5.00 h</span><span class="t" style="left:659.60px;top:460.00px;font-size:7.30px;line-height:13px;color:#36a03c;">0.00</span><svg style="left:690.10px;top:460.40px;" width="11" height="11"><use href="#i-edit"/></svg><svg style="left:701.70px;top:459.90px;" width="12.4" height="12.4"><use href="#i-user"/></svg><svg style="left:739.60px;top:460.70px;" width="11.4" height="11.4"><use href="#i-clock"/></svg><svg style="left:751.70px;top:460.70px;" width="11.4" height="11.4"><use href="#i-minus"/></svg><svg style="left:764.60px;top:460.10px;" width="10.8" height="10.8"><use href="#i-mon"/></svg><svg style="left:784.20px;top:460.60px;" width="10.6" height="10.6"><use href="#i-watch"/></svg><div class="a" style="left:34.00px;top:473.60px;width:766.60px;height:1.00px;background:#b4b4b4;"></div><div class="a" style="left:34.00px;top:474.60px;width:437.20px;height:15.80px;background:#fefbe8;"></div><div class="a" style="left:471.20px;top:474.60px;width:329.40px;height:15.80px;background:#d1e3f4;"></div><span class="t" style="left:618.58px;top:478.00px;font-size:6.05px;line-height:10px;color:#1f8f2c;font-weight:bold;">10.00 h</span><div class="a" style="left:34.00px;top:490.00px;width:766.60px;height:20.50px;background:#fff;"></div><div class="a" style="left:34.00px;top:509.90px;width:766.60px;height:0.80px;background:#dadada;"></div><svg style="left:36px;top:497.20px" width="8" height="8" viewBox="0 0 8 8"><rect x=".5" y=".5" width="6.8" height="6.6" fill="#fff" stroke="#a8a8a8" stroke-width=".8"/><path d="M2 3.8h3.8" stroke="#8a8a8a" stroke-width=".8"/></svg><span class="t" style="left:48.00px;top:493.00px;font-size:8.68px;line-height:14px;color:#555;">Datum: 07.04.2016 (4 Elemente)</span><div class="a" style="left:34.00px;top:510.50px;width:437.20px;height:15.50px;background:#fefbe8;"></div><div class="a" style="left:471.20px;top:510.50px;width:329.40px;height:15.50px;background:#fff;"></div><div class="a" style="left:34.00px;top:525.40px;width:437.20px;height:0.80px;background:rgba(255,255,255,.55);"></div><div class="a" style="left:471.20px;top:525.40px;width:329.40px;height:0.80px;background:#ebebeb;"></div><span class="t" style="left:36.00px;top:512.00px;font-size:7.64px;line-height:13px;color:#2d2d2d;font-weight:bold;">Arbeiten</span><span class="t" style="left:479.40px;top:512.00px;font-size:7.23px;line-height:13px;color:#555;">07.04.2016</span><span class="t" style="left:534.20px;top:512.00px;font-size:7.27px;line-height:13px;color:#555;">08:00</span><span class="t" style="left:573.60px;top:512.00px;font-size:7.19px;line-height:13px;color:#555;">12:00</span><span class="t" style="left:618.90px;top:512.00px;font-size:7.27px;line-height:13px;color:#36a03c;">4.00 h</span><span class="t" style="left:659.60px;top:512.00px;font-size:7.30px;line-height:13px;color:#36a03c;">0.00</span><svg style="left:690.10px;top:512.40px;" width="11" height="11"><use href="#i-edit"/></svg><svg style="left:701.70px;top:511.90px;" width="12.4" height="12.4"><use href="#i-user"/></svg><svg style="left:739.60px;top:512.70px;" width="11.4" height="11.4"><use href="#i-clock"/></svg><svg style="left:751.70px;top:512.70px;" width="11.4" height="11.4"><use href="#i-minus"/></svg><svg style="left:764.60px;top:512.10px;" width="10.8" height="10.8"><use href="#i-mon"/></svg><svg style="left:784.20px;top:512.60px;" width="10.6" height="10.6"><use href="#i-watch"/></svg><div class="a" style="left:34.00px;top:526.20px;width:437.20px;height:2.00px;background:#fefbe8;"></div><div class="a" style="left:801.60px;top:158.40px;width:9.00px;height:370.00px;background:#f1f1f1;"></div><div class="a" style="left:802.00px;top:169.80px;width:8.40px;height:226.60px;background:#b9b9b9;"></div><svg style="left:803.2px;top:162.4px" width="5.8" height="3.8" viewBox="0 0 7 5"><path d="M.4 4.4L3.5 1l3.1 3.4z" fill="#9c9c9c"/></svg><svg style="left:803.4px;top:520.4px" width="5.8" height="3.8" viewBox="0 0 7 5"><path d="M.4 .6L3.5 4l3.1-3.4z" fill="#333"/></svg><div class="a" style="left:34.00px;top:528.00px;width:777.00px;height:21.60px;background:#fefefe;"></div><div class="a" style="left:34.00px;top:528.00px;width:777.00px;height:1.00px;background:#d6d6d6;"></div><svg style="left:38px;top:533.9px" width="11.4" height="11.4" viewBox="0 0 11.4 11.4"><path d="M5.6 .5L.9 5.7 5.6 10.9M10.6 .5L5.9 5.7 10.6 10.9" fill="none" stroke="#c6c6c6" stroke-width="1"/></svg><svg style="left:60.6px;top:533.9px" width="8" height="11.4" viewBox="0 0 8 11.4"><path d="M6.6 .5L1.6 5.7 6.6 10.9" fill="none" stroke="#c6c6c6" stroke-width="1"/></svg><div class="a" style="left:77.20px;top:535.40px;width:0.80px;height:8.40px;background:#e2e2e2;"></div><span class="t" style="left:88.00px;top:534.00px;font-size:7.11px;line-height:12px;color:#555;">Seite</span><div class="a" style="left:116.20px;top:532.40px;width:25.60px;height:13.80px;background:#fff;border:1px solid #cfcfcf;box-sizing:border-box;border-radius:1px;"></div><span class="t" style="left:120.60px;top:534.00px;font-size:6.47px;line-height:11px;color:#555;">1</span><span class="t" style="left:147.80px;top:533.00px;font-size:7.60px;line-height:13px;color:#555;">von 4</span><div class="a" style="left:176.80px;top:535.40px;width:0.80px;height:8.40px;background:#e2e2e2;"></div><svg style="left:186.6px;top:533.9px" width="8" height="11.4" viewBox="0 0 8 11.4"><path d="M1.4 .5L6.4 5.7 1.4 10.9" fill="none" stroke="#9c9c9c" stroke-width="1"/></svg><svg style="left:205.8px;top:533.9px" width="11.4" height="11.4" viewBox="0 0 11.4 11.4"><path d="M.8 .5L5.5 5.7 .8 10.9M5.8 .5L10.5 5.7 5.8 10.9" fill="none" stroke="#9c9c9c" stroke-width="1"/></svg><div class="a" style="left:224.40px;top:535.40px;width:0.80px;height:8.40px;background:#e2e2e2;"></div><svg style="left:232.2px;top:533.6px" width="12" height="12" viewBox="0 0 12 12"><path d="M10 3.6A4.8 4.8 0 1 0 10.8 6.4" fill="none" stroke="#b8b8b8" stroke-width="1"/><path d="M10.6 .6V4.2H7" fill="none" stroke="#b8b8b8" stroke-width="1"/></svg><span class="t" style="left:575.80px;top:533.00px;font-size:7.39px;line-height:13px;color:#555;">Ansicht 1 - 20 von 64</span><div class="a" style="left:655.20px;top:535.40px;width:0.80px;height:8.40px;background:#e2e2e2;"></div><span class="t" style="left:665.40px;top:533.00px;font-size:7.20px;line-height:13px;color:#555;">Zeige</span><div class="a" style="left:693.40px;top:532.40px;width:35.20px;height:14.00px;background:#fff;border:1px solid #cfcfcf;box-sizing:border-box;border-radius:1px;"></div><span class="t" style="left:698.00px;top:534.00px;font-size:7.55px;line-height:13px;color:#555;">20</span><svg style="left:717px;top:535.6px;color:#8a8a8a" width="8" height="8"><use href="#i-chev"/></svg><span class="t" style="left:738.60px;top:533.00px;font-size:7.45px;line-height:13px;color:#555;">Elemente pro Seite</span><div class="a" style="left:811.00px;top:127.00px;width:1.00px;height:424.00px;background:#e6e6e6;"></div><div class="a" style="left:812.00px;top:127.00px;width:167.00px;height:424.00px;background:#f3f3f3;"></div><span class="t" style="left:823.60px;top:133.00px;font-size:9.27px;line-height:14px;color:#5f8fd8;">Freitag, 01.04.2016</span><svg style="left:962.8px;top:133.8px" width="12" height="12" viewBox="0 0 12 12"><circle cx="6" cy="6" r="5.1" fill="#fafafa" stroke="#a9a9a9" stroke-width="1"/><path d="M4.8 3.4L7.6 6 4.8 8.6" fill="none" stroke="#a0a0a0" stroke-width="1"/></svg><div class="a" style="left:817.60px;top:154.00px;width:33.00px;height:397.00px;background:#f5f7fc;"></div><div class="a" style="left:850.60px;top:154.00px;width:117.00px;height:397.00px;background:#fff;"></div><div class="a" style="left:850.20px;top:154.00px;width:0.80px;height:397.00px;background:#d9dde3;"></div><div class="a" style="left:967.20px;top:154.00px;width:0.80px;height:397.00px;background:#c3d2f4;"></div><div class="a" style="left:968.00px;top:154.00px;width:11.00px;height:397.00px;background:#efefef;"></div><div class="a" style="left:817.60px;top:153.60px;width:149.80px;height:0.90px;background:#e2e2e2;"></div><div class="a" style="left:850.80px;top:167.28px;width:116.60px;height:0.80px;background:#f0f0f0;"></div><span class="t" style="left:829.60px;top:155.00px;font-size:7.04px;line-height:11px;color:#666;font-weight:bold;">05:00</span><div class="a" style="left:817.60px;top:180.96px;width:149.80px;height:0.90px;background:#e2e2e2;"></div><div class="a" style="left:850.80px;top:194.64px;width:116.60px;height:0.80px;background:#f0f0f0;"></div><span class="t" style="left:829.60px;top:183.00px;font-size:7.04px;line-height:11px;color:#666;font-weight:bold;">06:00</span><div class="a" style="left:817.60px;top:208.32px;width:149.80px;height:0.90px;background:#e2e2e2;"></div><div class="a" style="left:850.80px;top:222.00px;width:116.60px;height:0.80px;background:#f0f0f0;"></div><span class="t" style="left:829.60px;top:210.00px;font-size:7.04px;line-height:11px;color:#666;font-weight:bold;">07:00</span><div class="a" style="left:817.60px;top:235.68px;width:149.80px;height:0.90px;background:#e2e2e2;"></div><div class="a" style="left:850.80px;top:249.36px;width:116.60px;height:0.80px;background:#f0f0f0;"></div><span class="t" style="left:829.60px;top:237.00px;font-size:7.04px;line-height:11px;color:#666;font-weight:bold;">08:00</span><div class="a" style="left:817.60px;top:263.04px;width:149.80px;height:0.90px;background:#e2e2e2;"></div><div class="a" style="left:850.80px;top:276.72px;width:116.60px;height:0.80px;background:#f0f0f0;"></div><span class="t" style="left:829.60px;top:265.00px;font-size:7.04px;line-height:11px;color:#666;font-weight:bold;">09:00</span><div class="a" style="left:817.60px;top:290.40px;width:149.80px;height:0.90px;background:#e2e2e2;"></div><div class="a" style="left:850.80px;top:304.08px;width:116.60px;height:0.80px;background:#f0f0f0;"></div><span class="t" style="left:829.60px;top:292.00px;font-size:7.04px;line-height:11px;color:#666;font-weight:bold;">10:00</span><div class="a" style="left:817.60px;top:317.76px;width:149.80px;height:0.90px;background:#e2e2e2;"></div><div class="a" style="left:850.80px;top:331.44px;width:116.60px;height:0.80px;background:#f0f0f0;"></div><span class="t" style="left:829.60px;top:318.00px;font-size:7.19px;line-height:13px;color:#666;font-weight:bold;">11:00</span><div class="a" style="left:817.60px;top:345.12px;width:149.80px;height:0.90px;background:#e2e2e2;"></div><div class="a" style="left:850.80px;top:358.80px;width:116.60px;height:0.80px;background:#f0f0f0;"></div><span class="t" style="left:829.60px;top:347.00px;font-size:7.04px;line-height:11px;color:#666;font-weight:bold;">12:00</span><div class="a" style="left:817.60px;top:372.48px;width:149.80px;height:0.90px;background:#e2e2e2;"></div><div class="a" style="left:850.80px;top:386.16px;width:116.60px;height:0.80px;background:#f0f0f0;"></div><span class="t" style="left:829.60px;top:374.00px;font-size:7.04px;line-height:11px;color:#666;font-weight:bold;">13:00</span><div class="a" style="left:817.60px;top:399.84px;width:149.80px;height:0.90px;background:#e2e2e2;"></div><div class="a" style="left:850.80px;top:413.52px;width:116.60px;height:0.80px;background:#f0f0f0;"></div><span class="t" style="left:829.60px;top:401.00px;font-size:7.04px;line-height:11px;color:#666;font-weight:bold;">14:00</span><div class="a" style="left:817.60px;top:427.20px;width:149.80px;height:0.90px;background:#e2e2e2;"></div><div class="a" style="left:850.80px;top:440.88px;width:116.60px;height:0.80px;background:#f0f0f0;"></div><span class="t" style="left:829.60px;top:429.00px;font-size:7.04px;line-height:11px;color:#666;font-weight:bold;">15:00</span><div class="a" style="left:817.60px;top:454.56px;width:149.80px;height:0.90px;background:#e2e2e2;"></div><div class="a" style="left:850.80px;top:468.24px;width:116.60px;height:0.80px;background:#f0f0f0;"></div><span class="t" style="left:829.60px;top:456.00px;font-size:7.04px;line-height:11px;color:#666;font-weight:bold;">16:00</span><div class="a" style="left:817.60px;top:481.92px;width:149.80px;height:0.90px;background:#e2e2e2;"></div><div class="a" style="left:850.80px;top:495.60px;width:116.60px;height:0.80px;background:#f0f0f0;"></div><span class="t" style="left:829.60px;top:484.00px;font-size:7.04px;line-height:11px;color:#666;font-weight:bold;">17:00</span><div class="a" style="left:817.60px;top:509.28px;width:149.80px;height:0.90px;background:#e2e2e2;"></div><div class="a" style="left:850.80px;top:522.96px;width:116.60px;height:0.80px;background:#f0f0f0;"></div><span class="t" style="left:829.60px;top:511.00px;font-size:7.04px;line-height:11px;color:#666;font-weight:bold;">18:00</span><div class="a" style="left:817.60px;top:536.64px;width:149.80px;height:0.90px;background:#e2e2e2;"></div><div class="a" style="left:850.80px;top:550.32px;width:116.60px;height:0.80px;background:#f0f0f0;"></div><span class="t" style="left:829.60px;top:538.00px;font-size:7.04px;line-height:11px;color:#666;font-weight:bold;">19:00</span><div class="a" style="left:851.70px;top:236.78px;width:111.40px;height:107.84px;background:#2d6ca8;border-radius:2px;"></div><span class="t" style="left:855.40px;top:236.00px;font-size:6.76px;line-height:11px;color:#fff;font-weight:bold;">08:00 - 12:00 Arbeiten</span><div class="a" style="left:851.70px;top:346.22px;width:111.40px;height:25.76px;background:#86a721;border-radius:2px;"></div><span class="t" style="left:855.40px;top:346.00px;font-size:6.89px;line-height:11px;color:#fff;font-weight:bold;">12:00 - 13:00 Pause</span><div class="a" style="left:851.70px;top:373.58px;width:111.40px;height:107.84px;background:#2d6ca8;border-radius:2px;"></div><span class="t" style="left:855.40px;top:373.00px;font-size:6.76px;line-height:11px;color:#fff;font-weight:bold;">13:00 - 17:00 Arbeiten</span><div class="a" style="left:969.20px;top:242.40px;width:9.40px;height:226.20px;background:#c1c1c1;"></div><svg style="left:970.6px;top:157.6px" width="5.8" height="3.8" viewBox="0 0 7 5"><path d="M.4 4.4L3.5 1l3.1 3.4z" fill="#333"/></svg><svg style="left:970.6px;top:542.6px" width="5.8" height="3.8" viewBox="0 0 7 5"><path d="M.4 .6L3.5 4l3.1-3.4z" fill="#333"/></svg><svg style="left:812.2px;top:334px" width="4" height="8" viewBox="0 0 4 8"><path d="M.8 1L3.2 4 .8 7" fill="none" stroke="#cfcfcf" stroke-width=".8"/></svg><div class="a" style="left:755.20px;top:233.40px;width:148.40px;height:17.60px;background:#eef1f8;border-radius:2px;box-shadow:0 1px 3px rgba(0,0,0,.28);z-index:20;"></div><span class="t" style="left:759.40px;top:236.00px;font-size:8.97px;line-height:14px;color:#444;z-index:21;">Zeitbuchungsänderung beantragen</span><svg style="left:740.6px;top:218.2px;z-index:30" width="12.4" height="15.9" viewBox="0 0 14 18"><path d="M4.2 1.6Q4.2 .6 5.2 .6T6.2 1.6V7L6.6 6.2Q6.8 5.6 7.6 5.8T8.4 6.8L8.8 6.4Q9.4 6 10 6.4T10.6 7.4L11 7.2Q11.8 7 12.2 7.6T12.6 9V12Q12.6 14 11.6 15.6V17H5.4V15.6Q3.4 13.4 1.4 10.6Q.8 9.6 1.6 9T3.2 9.2L4.2 10.4Z" fill="#fff" stroke="#27334d" stroke-width="1" stroke-linejoin="round"/></svg></body></html>
